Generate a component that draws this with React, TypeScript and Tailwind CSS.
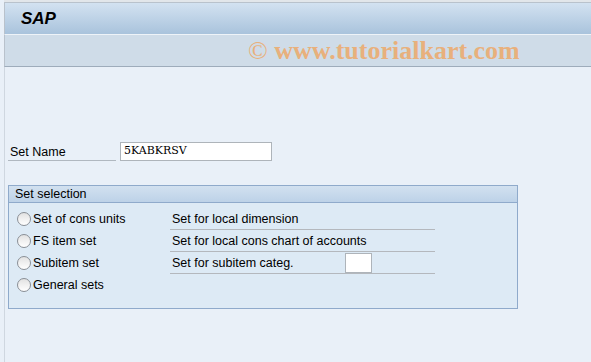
import { Fragment } from "react";

const radios = ["Set of cons units", "FS item set", "Subitem set", "General sets"];
const sets = ["Set for local dimension", "Set for local cons chart of accounts", "Set for subitem categ."];

function Radio() {
  return (
    <span className="inline-block w-[14px] h-[14px] rounded-full border border-[#8a8f96] bg-gradient-to-b from-[#e2e2e2] to-[#ffffff] mr-[2px] shrink-0" />
  );
}

export default function App() {
  return (
    <div
      className="w-[591px] h-[362px] bg-[#e9f0f8] overflow-hidden flex flex-col text-[12.5px] text-black"
      style={{ fontFamily: "'Liberation Sans', Arial, sans-serif" }}
    >
      <div className="h-[3px] bg-[#e2e6ea] border-b border-[#b9c2cc] ml-[4px]" />
      <div className="h-[31px] ml-[4px] bg-gradient-to-b from-[#d3e2f1] to-[#a9c3dc] border-l border-[#b9c2cc] flex items-center pl-[16px]">
        <span className="italic font-bold text-[17px] text-black">SAP</span>
      </div>
      <div className="h-[33px] ml-[4px] bg-[#cfdce8] border-t border-[#eef3f8] border-b border-b-[#9eacbb] border-l border-l-[#b9c2cc] flex items-center">
        <span
          className="ml-[243px] text-[26px] font-bold text-[#e8b07c] leading-none"
          style={{ fontFamily: "'Liberation Serif', 'Times New Roman', serif" }}
        >
          <span className="font-normal">©</span> www.tutorialkart.com
        </span>
      </div>
      <div className="flex-1 ml-[4px] border-l border-[#cfd7e0] pl-[3px] pt-[75px]">
        <div className="flex items-center h-[19px]">
          <div className="w-[108px] h-[19px] border-b border-[#b0b8c0] pl-[2px] flex items-center pt-[3px]">
            Set Name
          </div>
          <div
            className="ml-[4px] w-[152px] h-[19px] bg-white border border-[#aeb4ba] pl-[3px] flex items-center text-[11px]"
            style={{ fontFamily: "'DejaVu Serif', serif" }}
          >
            5KABKRSV
          </div>
        </div>
        <div className="mt-[24px] w-[510px] h-[124px] border border-[#8faacb] bg-[#ddeaf5] flex flex-col">
          <div className="h-[17px] bg-gradient-to-b from-[#d2e1f0] to-[#bdd2e8] border-b border-[#8faacb] pl-[6px] flex items-center">
            Set selection
          </div>
          <div className="grid grid-cols-[153px_265px] pl-[8px] pt-[5px]">
            {radios.map((r, i) => (
              <Fragment key={r}>
                <div className="h-[22px] flex items-center">
                  <Radio />
                  {r}
                </div>
                {i < 3 ? (
                  <div className="h-[22px] border-b border-[#b4b8bd] flex items-center pl-[2px] pt-[1px] relative">
                    {sets[i]}
                    {i === 2 && (
                      <span className="absolute left-[175px] top-[1px] w-[27px] h-[20px] bg-white border border-[#aeb4ba]" />
                    )}
                  </div>
                ) : (
                  <div className="h-[22px]" />
                )}
              </Fragment>
            ))}
          </div>
        </div>
      </div>
    </div>
  );
}
